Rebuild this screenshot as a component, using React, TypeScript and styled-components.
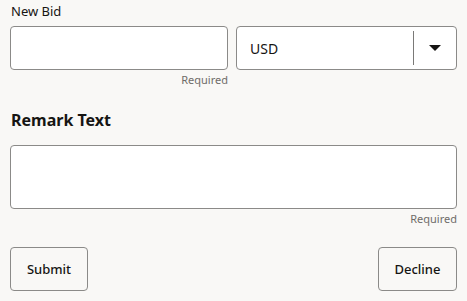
import { createGlobalStyle } from 'styled-components';
import styled from 'styled-components';

const GlobalStyle = createGlobalStyle`
  html, body {
    margin: 0;
    padding: 0;
    background: #f9f8f6;
  }
  body {
    font-family: 'Noto Sans', 'Open Sans', Arial, sans-serif;
    color: #161513;
  }
  * {
    box-sizing: border-box;
  }
`;

const borderColor = '#8b8a88';
const hintColor = '#6f6c69';

const Form = styled.div`
  width: 467px;
  padding: 0 10px;
  display: flex;
  flex-direction: column;
`;

const Label = styled.label`
  display: block;
  font-size: 13px;
  line-height: 18px;
  margin-top: 2px;
  margin-left: 1px;
  margin-bottom: 6px;
`;

const Row = styled.div`
  display: grid;
  grid-template-columns: 218px 1fr;
  gap: 8px;
`;

const Field = styled.div`
  display: flex;
  flex-direction: column;
`;

const TextInput = styled.input`
  height: 44px;
  width: 100%;
  border: 1px solid ${borderColor};
  border-radius: 4px;
  background: #fff;
  padding: 0 13px;
  font: inherit;
  font-size: 14px;
  outline: none;
`;

const Hint = styled.span`
  align-self: flex-end;
  font-size: 11px;
  line-height: 16px;
  margin-top: 2px;
  color: ${hintColor};
`;

const Select = styled.div`
  height: 44px;
  border: 1px solid ${borderColor};
  border-radius: 4px;
  background: #fff;
  display: flex;
  align-items: center;
`;

const SelectValue = styled.span`
  flex: 1;
  padding-left: 13px;
  font-size: 14px;
`;

const Divider = styled.span`
  width: 1px;
  align-self: stretch;
  margin: 4px 0;
  background: #7a7977;
`;

const Caret = styled.span`
  width: 42px;
  display: flex;
  justify-content: center;
  align-items: center;
`;

const SectionTitle = styled.h2`
  margin: 21px 0 0 1px;
  font-size: 16px;
  font-weight: 700;
  line-height: 22px;
`;

const TextArea = styled.textarea`
  margin-top: 14px;
  height: 64px;
  width: 100%;
  resize: none;
  border: 1px solid ${borderColor};
  border-radius: 4px;
  background: #fff;
  font: inherit;
  outline: none;
`;

const Actions = styled.div`
  display: flex;
  justify-content: space-between;
  margin-top: 20px;
`;

const Button = styled.button<{ $width: number }>`
  width: ${(p) => p.$width}px;
  height: 44px;
  border: 1px solid ${borderColor};
  border-radius: 4px;
  background: transparent;
  font-family: inherit;
  font-size: 13px;
  font-weight: 500;
  color: #161513;
  cursor: pointer;
`;

export default function App() {
  return (
    <>
      <GlobalStyle />
      <Form>
        <Label htmlFor="bid">New Bid</Label>
        <Row>
          <Field>
            <TextInput id="bid" />
            <Hint>Required</Hint>
          </Field>
          <Field>
            <Select>
              <SelectValue>USD</SelectValue>
              <Divider />
              <Caret>
                <svg width="12" height="6" viewBox="0 0 12 6">
                  <path d="M0 0h12L6 6z" fill="#161513" />
                </svg>
              </Caret>
            </Select>
          </Field>
        </Row>
        <SectionTitle>Remark Text</SectionTitle>
        <Field>
          <TextArea />
          <Hint>Required</Hint>
        </Field>
        <Actions>
          <Button $width={78}>Submit</Button>
          <Button $width={79}>Decline</Button>
        </Actions>
      </Form>
    </>
  );
}
